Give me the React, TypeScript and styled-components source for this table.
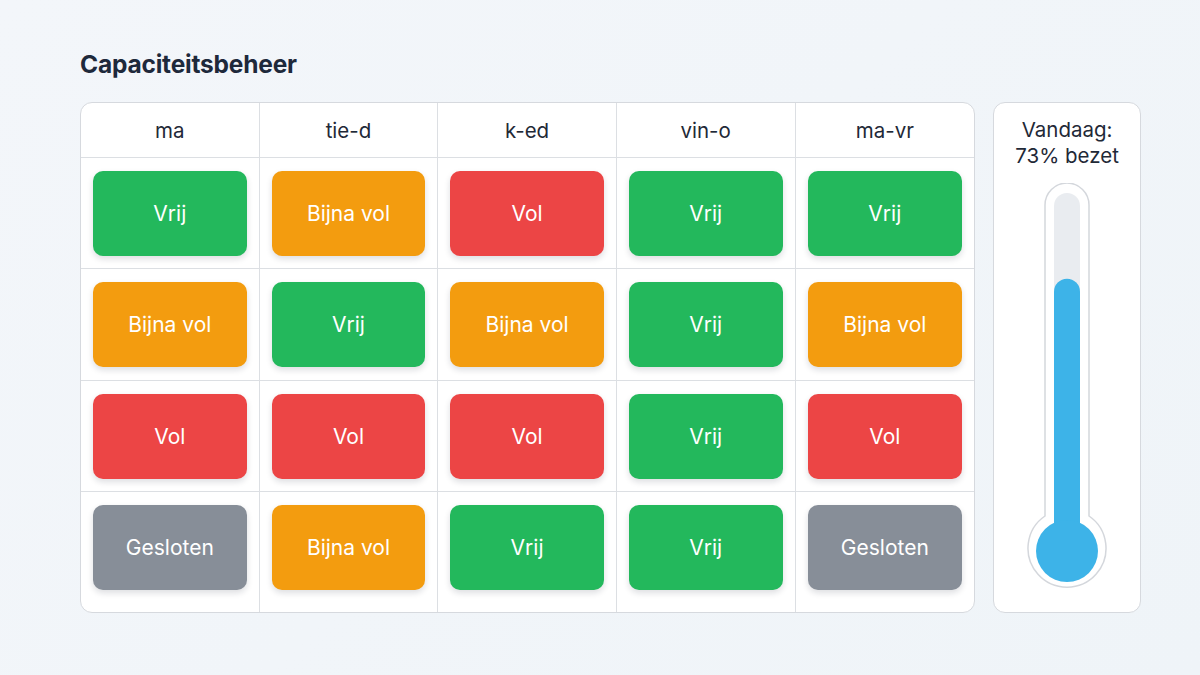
import React from "react";
import styled, { createGlobalStyle } from "styled-components";

const Global = createGlobalStyle`
  html, body { margin: 0; padding: 0; background: #f1f5f9; }
  body { font-family: Inter, "Noto Sans", sans-serif; color: #1e293b; }
`;

const Page = styled.div`
  width: 1200px;
  height: 675px;
  box-sizing: border-box;
  padding: 50px 59px 0 80px;
  background: linear-gradient(135deg, #f3f6fa 0%, #eff4f8 100%);
`;

const Title = styled.h1`
  margin: 0;
  height: 28px;
  font-size: 24.5px;
  font-weight: 650;
  line-height: 28px;
  letter-spacing: -0.2px;
  color: #1e293b;
`;

const Main = styled.div`
  margin-top: 24px;
  display: flex;
  gap: 18px;
  height: 511px;
`;

const Table = styled.div`
  width: 896px;
  box-sizing: border-box;
  background: #ffffff;
  border: 1px solid #d6d9de;
  border-radius: 12px;
  overflow: hidden;
  display: grid;
  grid-template-columns: repeat(5, 1fr);
  grid-template-rows: 55px 111px 112px 111px 1fr;
`;

const Cell = styled.div<{ $lastCol: boolean; $lastRow: boolean }>`
  border-right: ${(p) => (p.$lastCol ? "none" : "1px solid #dcdfe3")};
  border-bottom: ${(p) => (p.$lastRow ? "none" : "1px solid #dcdfe3")};
  box-sizing: border-box;
  padding: 13px 12px 0 12px;
`;

const HeadCell = styled.div<{ $lastCol: boolean }>`
  border-right: ${(p) => (p.$lastCol ? "none" : "1px solid #dcdfe3")};
  border-bottom: 1px solid #dcdfe3;
  display: flex;
  align-items: center;
  justify-content: center;
  font-size: 20.5px;
  color: #1f2937;
  padding-top: 1px;
`;

const colors: Record<string, string> = {
  Vrij: "#23b85c",
  "Bijna vol": "#f39c0f",
  Vol: "#ec4545",
  Gesloten: "#878e98",
};

const Status = styled.div<{ $bg: string }>`
  height: 85px;
  border-radius: 10px;
  background: ${(p) => p.$bg};
  color: #ffffff;
  font-size: 21px;
  display: flex;
  align-items: center;
  justify-content: center;
  box-shadow: 0 3px 6px rgba(15, 23, 42, 0.14);
`;

const Gauge = styled.div`
  width: 148px;
  box-sizing: border-box;
  background: #ffffff;
  border: 1px solid #d6d9de;
  border-radius: 12px;
  display: flex;
  flex-direction: column;
  align-items: center;
  padding-top: 14px;
`;

const GaugeLabel = styled.div`
  font-size: 20.5px;
  line-height: 26px;
  text-align: center;
  color: #1f2937;
`;

const ThermoWrap = styled.div`
  margin-top: 14px;
`;

const headers = ["ma", "tie-d", "k-ed", "vin-o", "ma-vr"];
const rows = [
  ["Vrij", "Bijna vol", "Vol", "Vrij", "Vrij"],
  ["Bijna vol", "Vrij", "Bijna vol", "Vrij", "Bijna vol"],
  ["Vol", "Vol", "Vol", "Vrij", "Vol"],
  ["Gesloten", "Bijna vol", "Vrij", "Vrij", "Gesloten"],
];

function Thermometer({ pct }: { pct: number }) {
  const top = 10;
  const bulbCy = 368;
  const tubeBottom = 340;
  const fillTop = tubeBottom - pct * (tubeBottom - top) + 0;
  return (
    <svg width="90" height="412" viewBox="0 0 90 412">
      <path
        d="M23 22 A22 22 0 0 1 67 22 L67 333 A39 39 0 1 1 23 333 Z"
        fill="#ffffff"
        stroke="#d4d7dc"
        strokeWidth="1.5"
      />
      <rect x="32" y={top} width="26" height="340" rx="13" fill="#e9ecf0" />
      <rect x="32" y={fillTop} width="26" height={bulbCy - fillTop} rx="13" fill="#3db3e8" />
      <circle cx="45" cy={bulbCy} r="31" fill="#3db3e8" />
    </svg>
  );
}

export default function App() {
  return (
    <Page>
      <Global />
      <Title>Capaciteitsbeheer</Title>
      <Main>
        <Table>
          {headers.map((h, i) => (
            <HeadCell key={h} $lastCol={i === 4}>
              {h}
            </HeadCell>
          ))}
          {rows.map((r, ri) =>
            r.map((s, ci) => (
              <Cell key={`${ri}-${ci}`} $lastCol={ci === 4} $lastRow={ri === 3}>
                <Status $bg={colors[s]}>{s}</Status>
              </Cell>
            ))
          )}
        </Table>
        <Gauge>
          <GaugeLabel>
            Vandaag:
            <br />
            73% bezet
          </GaugeLabel>
          <ThermoWrap>
            <Thermometer pct={0.74} />
          </ThermoWrap>
        </Gauge>
      </Main>
    </Page>
  );
}
